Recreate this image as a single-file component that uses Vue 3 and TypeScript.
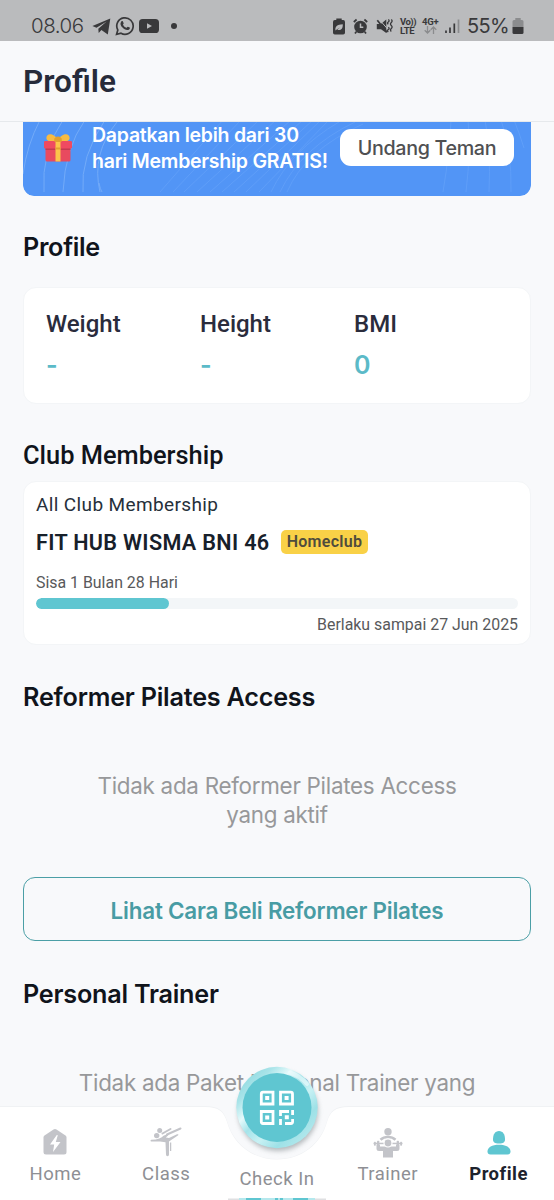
<script setup lang="ts">
interface Stat { label: string; value: string }
interface Tab { id: string; label: string; active?: boolean }

const stats: Stat[] = [
  { label: 'Weight', value: '-' },
  { label: 'Height', value: '-' },
  { label: 'BMI', value: '0' },
]

const tabs: Tab[] = [
  { id: 'home', label: 'Home' },
  { id: 'class', label: 'Class' },
  { id: 'checkin', label: 'Check In' },
  { id: 'trainer', label: 'Trainer' },
  { id: 'profile', label: 'Profile', active: true },
]

const membershipProgress = 27.6
</script>

<template>
  <div class="screen">
    <div class="status">
      <span class="clock">08.06</span>
      <svg class="telegram" width="19" height="17" viewBox="0 0 19 17"><path d="M0.4 8.1 18.3 0.4 15.8 16.4 9.4 12 6.7 14.9 6.3 10.7 14.6 3.5 4.5 9.7Z" /></svg>
      <svg class="whatsapp" width="20" height="20" viewBox="0 0 20 20">
        <path class="line" d="M1.6 18.3 2.8 14A8.2 8.2 0 1 1 6 17.2Z" />
        <path d="M6.3 5.4c.4-.5 1.3-.6 1.6 0l.8 1.9c.1.4-.6 1.1-.7 1.4.8 1.5 1.9 2.5 3.4 3.1.4-.1 1-1.2 1.4-1.1l1.9.9c.4.2.1 1.5-.6 2-2.3 1.4-5-.4-6.600-2C5.600 9.600 4.700 7.200 6.300 5.400Z" />
      </svg>
      <svg class="youtube" width="20" height="14" viewBox="0 0 20 14"><rect width="20" height="14" rx="3.600" /><path class="cut" d="M8 4.300 13 7 8 9.700Z" /></svg>
      <i class="dot"></i>
      <div class="right">
        <svg class="saver" width="12" height="17" viewBox="0 0 12 17"><path d="M3.300 0.500h5.400v1.600h1.500q1.800 0 1.800 1.800v10.800q0 1.800-1.800 1.800h-8.400q-1.800 0-1.800-1.800V3.900q0-1.800 1.800-1.800h1.500Z" /><path class="cut" d="M2.500 12.500c-.7-4 1.500-6 7.300-6.300.1 4.900-2 6.300-5.500 5.600l2.700-2.300-3.700 2.200Z" /></svg>
        <svg class="alarm" width="15" height="17" viewBox="0 0 15 17"><circle cx="7.500" cy="9" r="6.300" /><path class="line" d="M.8 4 3.600 1.500M14.200 4 11.400 1.500M3.300 13.700 2 15.500M11.700 13.700 13 15.500" /><path class="cutline" d="M7.500 5.500V9.300H10.300" /></svg>
        <svg class="mute" width="17" height="17" viewBox="0 0 17 17"><path d="M.8 6h4L10.300 1.500v13.500L5 11.200H.8Z" /><path class="slash" d="M1.500 1.200 12 13" /><path class="line" d="M1.300 2.200 11 14.300" /><path class="wave" d="M12.300 1.500q1.600 1.200 0 2.400t0 2.400M12.300 9.200q1.600 1.200 0 2.400t0 2.400M15.300 1.500q1.600 1.500 0 3t0 3 0 3 0 3" /></svg>
        <span class="volte"><b>Vo))</b><b class="lte">LTE</b></span>
        <span class="net"><b>4G+</b><svg width="13" height="8" viewBox="0 0 13 8"><path d="M3.500 0v7M.7 4.300 3.500 7l2.800-2.700M9.500 8V1M6.700 3.700 9.500 1l2.800 2.700" /></svg></span>
        <svg class="signal" width="15" height="16" viewBox="0 0 15 16"><path d="M1 12.500V15M5 9.500V15M9.300 5.500V15" /><path class="dim" d="M13.500 1.500V15" /></svg>
        <span class="percent">55%</span>
        <svg class="battery" width="12" height="17" viewBox="0 0 12 17"><path class="dim" d="M3.300 0h5.400v2h1.300q1.500 0 1.500 1.500V9H.5V3.500Q.5 2 2 2h1.300Z" /><path d="M.5 9h11v5.500q0 1.500-1.500 1.500H2Q.5 16 .5 14.500Z" /></svg>
      </div>
    </div>

    <header class="header"><h1>Profile</h1></header>

    <main class="content">
      <section class="banner">
        <svg class="arcs" width="508" height="86" viewBox="0 0 508 86">
          <path class="strong" d="M0 64Q4 35 17 10M21 82Q18 42 40 10M40 82Q42 38 62 10M60 82Q57 47 82 10M77 82Q68 44 94 12M76 73Q77 79 79 82" />
          <path d="M137 82 200 10M150 82 218 10M161 82 236 10M174 82 253 10M187 82 268 10M199 82 280 10M211 82 290 10M223 82 298 10M236 82 306 10M248 82Q268 40 316 12M257 82Q278 38 332 12M264 82Q282 40 340 14" />
          <path d="M420 82Q427 40 428 10M443 82Q448 40 445 10M466 82Q468 40 462 10M488 82Q489 40 478 10M501 38Q496 22 491 10" />
        </svg>
        <svg class="gift" width="28" height="29" viewBox="0 0 28 29">
          <path class="bow" d="M13 8C10 9 3 9 2.400 5.500 2 2 5 .4 8 1.500c3 1 4.500 3.500 6 3.500s3-2.500 6-3.500c3-1.100 6 .5 5.600 4C25 9 18 9 15 8Z" />
          <circle class="knot" cx="14" cy="7" r="3.600" />
          <rect class="box" x="1.500" y="13" width="25" height="15.500" rx="1.600" />
          <rect class="lid" x="0" y="8" width="28" height="7.500" rx="1.200" />
          <path class="shade" d="M1.500 15.500h25v1.400h-25Z" />
          <path class="ribbon" d="M11.500 8h5v20.500h-5Z" />
          <path class="knot" d="M11.500 14.500h5v2h-5ZM10.500 5.500q3.500-3 7 0V9h-7Z" />
        </svg>
        <p class="promo">Dapatkan lebih dari 30<br />hari Membership GRATIS!</p>
        <button class="invite"><span>Undang Teman</span></button>
      </section>

      <h2 class="h-profile">Profile</h2>
      <section class="card stats">
        <div v-for="s in stats" :key="s.label" class="stat">
          <span class="stat-label">{{ s.label }}</span>
          <span class="stat-value">{{ s.value }}</span>
        </div>
      </section>

      <h2 class="h-club">Club Membership</h2>
      <section class="card membership">
        <div class="plan">All Club Membership</div>
        <div class="club-row"><span class="club">FIT HUB WISMA BNI 46</span><span class="badge">Homeclub</span></div>
        <div class="remain">Sisa 1 Bulan 28 Hari</div>
        <div class="track"><div class="fill" :style="{ width: membershipProgress + '%' }"></div></div>
        <div class="until"><span>Berlaku sampai 27 Jun 2025</span></div>
      </section>

      <h2 class="h-reformer">Reformer Pilates Access</h2>
      <p class="empty e-reformer">Tidak ada Reformer Pilates Access<br /><span>yang aktif</span></p>
      <button class="outline"><span>Lihat Cara Beli Reformer Pilates</span></button>

      <h2 class="h-trainer">Personal Trainer</h2>
      <p class="empty e-trainer">Tidak ada Paket Personal Trainer yang</p>
    </main>

    <nav class="nav">
      <svg class="nav-bg" width="554" height="140" viewBox="0 0 554 140">
        <defs>
          <linearGradient id="ring" x1="0.1" y1="0.1" x2="0.9" y2="0.9">
            <stop offset="0" stop-color="#8fdae0" /><stop offset=".16" stop-color="#a9e4e9" /><stop offset=".32" stop-color="#e6fafb" /><stop offset=".45" stop-color="#a5e4ea" />
            <stop offset=".62" stop-color="#c8f1f4" /><stop offset=".8" stop-color="#9ee1e7" /><stop offset="1" stop-color="#b5e9ed" />
          </linearGradient>
          <filter id="soft" x="-20%" y="-20%" width="140%" height="140%"><feGaussianBlur stdDeviation="2.500" /></filter>
        </defs>
        <path class="halo" d="M0 46H205C219 46 224 51 227 61 233 83 252 99 277 99S321 83 327 61C330 51 335 46 349 46H554V140H0Z" />
        <path class="bar" d="M0 47H205C219 47 224 52 227 62 233 84 252 99.500 277 99.500S321 84 327 62C330 52 335 47 349 47H554V140H0Z" />
        <circle class="shadow" cx="278" cy="51" r="40" filter="url(#soft)" />
        <circle cx="277" cy="47.500" r="40.700" fill="url(#ring)" />
        <path class="glint" d="M290 12.500Q300 16 307 24" />
        <circle class="disc" cx="277" cy="47.500" r="34.500" />
        <g class="qr">
          <path d="M263 32.200h10v11.800h-11.700v-10.100q0-1.700 1.700-1.700ZM280.500 32.200h10.300q1.700 0 1.700 1.700v10.100h-12ZM261.300 51.500h11.700v12h-10q-1.700 0-1.700-1.700Z" />
          <path d="M280.500 56V51.500H289M292.600 50V55M280.500 59V65M285 63.500h5.900q1.700 0 1.700-1.700V59" />
        </g>
        <path class="pix" d="M265.200 36.100h4v4h-4ZM284.600 36.100h4v4h-4ZM265.200 55.500h4v4h-4ZM284.800 55.300h4v4h-4Z" />
        <path class="edge-grey" d="M228 138.500h98v1.500h-98Z" />
        <path class="edge-ring" d="M239 138h76v2h-76Z" />
        <path class="edge" d="M246 138h15v2h-15ZM275 138h3v2h-3ZM280 138h3v2h-3ZM293 138h15v2h-15Z" />
      </svg>
      <div v-for="t in tabs" :key="t.id" class="tab" :class="[t.id, { active: t.active }]">
        <svg v-if="t.id === 'home'" width="32" height="32" viewBox="0 0 32 32"><path d="M14.500 2.500q1.500-1 3 0l9 6q1 .7 1 2V25q0 2.500-2.500 2.500H7Q4.500 27.500 4.500 25V10.500q0-1.300 1-2Z" /><path class="bolt" d="M17.800 8 11 17.500h4.200L14 25l7.500-10h-4.700L18.800 8.300Z" /></svg>
        <svg v-else-if="t.id === 'class'" width="32" height="32" viewBox="0 0 32 32">
          <circle cx="9.700" cy="3.400" r="2.500" /><circle cx="6.700" cy="8.600" r="2.700" />
          <path class="limb" d="M12.500 6.500 20.500 2M17 7.500 30.500 1.500" />
          <path d="M1.200 12.800q5 0 8-1.300t4.300-2.800l4-1.700q1.500.5.300 1.800l-2 1.600 3.200.6 8-3.700q2-.6 1.200 1l-9.200 6.200v13q0 1.800-1.500 1.800T16 27.500l-.5-12.200-5.500-.8H1.200Q-.2 13.700 1.200 12.800Z" />
          <path class="thin" d="M20.600 15.500v8.500" />
        </svg>
        <svg v-else-if="t.id === 'trainer'" width="32" height="32" viewBox="0 0 32 32">
          <circle cx="16" cy="4.800" r="3.700" />
          <path class="arm" d="M8.500 12.800q3-2.800 7.500-2.800t7.500 2.800" />
          <path d="M1.500 15.700h29v1.500h-29Z" /><rect x="2" y="14.700" width="1.800" height="4" rx=".6" /><rect x="5" y="13.700" width="2.300" height="6" rx=".8" /><rect x="24.700" y="13.700" width="2.300" height="6" rx=".8" /><rect x="28.200" y="14.700" width="1.800" height="4" rx=".6" />
          <path d="M4.500 17.500h3.500v2h16v-2h3.500v4q0 2.500-2.500 2.500h-4v6.500h-10V24H7q-2.500 0-2.500-2.500Z" />
          <circle class="ringed" cx="16" cy="16" r="4" />
        </svg>
        <svg v-else-if="t.id === 'profile'" width="32" height="32" viewBox="0 0 32 32"><path d="M16 4c4 0 6 3.500 6 8.500 0 2.500-1.500 4-6 4s-6-1.500-6-4C10 7.500 12 4 16 4Z" /><path d="M16 17.800c7 0 11.500 2.700 11.500 6.700 0 2-1 3-3 3h-17c-2 0-3-1-3-3 0-4 4.500-6.700 11.500-6.700Z" /></svg>
        <span>{{ t.label }}</span>
      </div>
    </nav>
  </div>
</template>

<style>
body { background: #f8f9fb; }
</style>

<style scoped>
* { box-sizing: border-box; }
.screen { position: relative; width: 554px; height: 1200px; overflow: hidden; background: #f8f9fb; font-family: Roboto, "Liberation Sans", sans-serif; display: flex; flex-direction: column; }
h1, h2, p { margin: 0; }
span { white-space: nowrap; }

.status { height: 41px; flex: none; background: #babbbd; display: flex; align-items: center; padding: 11px 30px 0 31px; color: #39393b; }
.status svg { fill: #39393b; flex: none; }
.status .line { fill: none; stroke: #39393b; stroke-width: 1.7; }
.status .cut { fill: #babbbd; }
.status .cutline { fill: none; stroke: #babbbd; stroke-width: 1.5; }
.status .slash { stroke: #babbbd; stroke-width: 1; transform: translate(1px, -.5px); }
.status .wave { fill: none; stroke: #39393b; stroke-width: 1.3; }
.status .dim { fill: #8b8c8e; }
.clock { width: 61px; font: 300 20.500px/24px Inter, sans-serif; letter-spacing: -.5px; }
.whatsapp { margin-left: 4px; }
.youtube { margin-left: 4px; }
.dot { width: 6px; height: 6px; margin-left: 12px; border-radius: 50%; background: #39393b; }
.right { display: flex; align-items: center; margin-left: auto; }
.alarm { margin-left: 8.500px; }
.mute { margin-left: 8px; }
.volte { width: 16px; margin-left: 7px; }
.volte b, .net b { display: block; font: 700 9.500px/9px Roboto, sans-serif; letter-spacing: -.5px; }
.volte .lte { letter-spacing: -.3px; }
.net { width: 17px; margin-left: 6px; height: 18px; }
.net b { letter-spacing: -.2px; }
.net svg { display: block; margin: 0 0 0 2px; fill: none; stroke: #8b8c8e; stroke-width: 1.3; }
.signal { margin-left: 6px; }
.status .signal path { stroke: #39393b; stroke-width: 1.7; }
.status .signal .dim { stroke: #8b8c8e; }
.percent { width: 45px; margin-left: 7px; font: 400 20px/24px Inter, sans-serif; letter-spacing: -.6px; }

.header { height: 81px; flex: none; border-bottom: 1px solid #e6e9ec; display: flex; align-items: center; padding: 2px 23px 0; }
h1 { font-size: 31.500px; line-height: 40px; font-weight: 600; color: #262b3a; }

.content { padding: 0 23px; flex: 1; display: flex; flex-direction: column; overflow: hidden; }
.banner { position: relative; height: 86px; margin-top: -12px; flex: none; border-radius: 0 0 11px 11px; background: #5295f6; display: flex; align-items: flex-start; overflow: hidden; clip-path: inset(12px 0 0 0 round 0 0 11px 11px); }
.arcs { position: absolute; left: 0; top: 0; fill: none; stroke: #5f9ef8; stroke-width: 1; }
.arcs .strong { stroke: #73abf8; }
.gift { position: relative; margin: 23px 0 0 21px; flex: none; }
.gift .box { fill: #e84a5f; }
.gift .lid { fill: #ef4a61; }
.gift .shade { fill: #c43a50; }
.gift .ribbon { fill: #fcc44a; }
.gift .bow { fill: #f8bb42; }
.gift .knot { fill: #e2a030; }
.promo { position: relative; margin: 12px 0 0 20px; width: 248px; flex: none; font: 600 19.500px/26px Inter, sans-serif; letter-spacing: -.25px; color: #fff; white-space: nowrap; }
.invite { position: relative; margin: 19px 0 0; width: 174px; height: 37px; border: 0; border-radius: 11px; background: #fff; padding: 0; flex: none; font: 500 19.700px/38px Inter, sans-serif; letter-spacing: -.33px; color: #4f5052; }

h2 { font: 600 25.200px/32px Inter, sans-serif; letter-spacing: -.22px; color: #10141b; white-space: nowrap; flex: none; }
.h-profile { margin-top: 35px; letter-spacing: -.3px; }
.card { background: #fff; border: 1px solid #f3f5f7; border-radius: 13px; flex: none; }
.stats { height: 117px; margin-top: 24px; padding: 21px 0 0 22px; display: flex; }
.stat { width: 154px; display: flex; flex-direction: column; }
.stat-label { font-size: 24px; line-height: 30px; font-weight: 500; color: #2a2c3c; }
.stat-value { margin-top: 11px; font: 600 25px/30px Inter, sans-serif; letter-spacing: -.5px; color: #5bbac8; }
.h-club { margin-top: 35px; font: 500 25.400px/32px Roboto, sans-serif; letter-spacing: 0; }
.membership { height: 164px; margin-top: 10px; padding: 10px 12px 0; }
.plan { font-size: 19px; line-height: 26px; letter-spacing: .37px; color: #26303a; }
.club-row { display: flex; align-items: center; height: 24px; margin-top: 12px; }
.club { width: 245px; padding-top: 2px; font: 600 21.600px/24px Roboto, sans-serif; letter-spacing: .33px; color: #17202a; }
.badge { width: 87px; height: 24px; border-radius: 5px; background: #f9d147; text-align: center; font-size: 16px; line-height: 24px; font-weight: 600; letter-spacing: .3px; color: #4f4c3d; }
.remain { margin-top: 19px; font-size: 15.900px; line-height: 20px; color: #58595b; }
.track { height: 11px; margin-top: 4.500px; border-radius: 6px; background: #f3f6f8; overflow: hidden; }
.fill { height: 100%; border-radius: 6px; background: #5fc6d1; }
.until { display: flex; justify-content: flex-end; margin-top: 5.500px; font-size: 15.900px; line-height: 21px; color: #58595b; }
.h-reformer { margin-top: 36px; }
.empty { font: 400 22.400px/29px Inter, sans-serif; letter-spacing: -.27px; color: #97989a; text-align: center; white-space: nowrap; flex: none; }
.e-reformer { margin-top: 58px; }
.outline { height: 64px; margin-top: 48px; border: 1.500px solid #4b9fa6; border-radius: 12px; background: transparent; padding: 2px 0 0; flex: none; font: 600 22.400px/61px Inter, sans-serif; letter-spacing: -.2px; color: #489ca4; }
.h-trainer { margin-top: 37px; }
.e-trainer { margin-top: 58px; }

.nav { position: absolute; left: 0; bottom: 0; width: 554px; height: 140px; display: grid; grid-template-columns: repeat(5, 1fr); padding-top: 67px; }
.nav-bg { position: absolute; left: 0; top: 0; }
.halo { fill: #f0f2f4; }
.bar { fill: #fff; }
.shadow { fill: #7c8488; opacity: .55; }
.disc { fill: #5fc6d1; }
.glint { fill: none; stroke: #f0fcfd; stroke-width: 4; stroke-linecap: round; opacity: .6; }
.qr { fill: none; stroke: #fff; stroke-width: 2.800; }
.pix { fill: #fff; }
.edge-grey { fill: #dfe0e2; }
.edge-ring { fill: #b5e8ed; }
.edge { fill: #5fc6d1; }
.tab { position: relative; display: flex; flex-direction: column; align-items: center; color: #8e8f94; fill: #c3c4c9; font-size: 18.500px; line-height: 24px; letter-spacing: .5px; }
.tab span { margin-top: 3px; }
.tab.checkin span { margin-top: 40px; }
.tab.active { color: #1d222d; fill: #5fc6d1; font-weight: 700; }
.bolt, .ringed { stroke: #fff; }
.bolt { fill: #fff; stroke: none; }
.ringed { stroke-width: 1.2; }
.limb { stroke: #c3c4c9; stroke-width: 2; stroke-linecap: round; fill: none; }
.thin { stroke: #c3c4c9; stroke-width: 1.3; }
.arm { fill: none; stroke: #c3c4c9; stroke-width: 2.6; }
</style>
